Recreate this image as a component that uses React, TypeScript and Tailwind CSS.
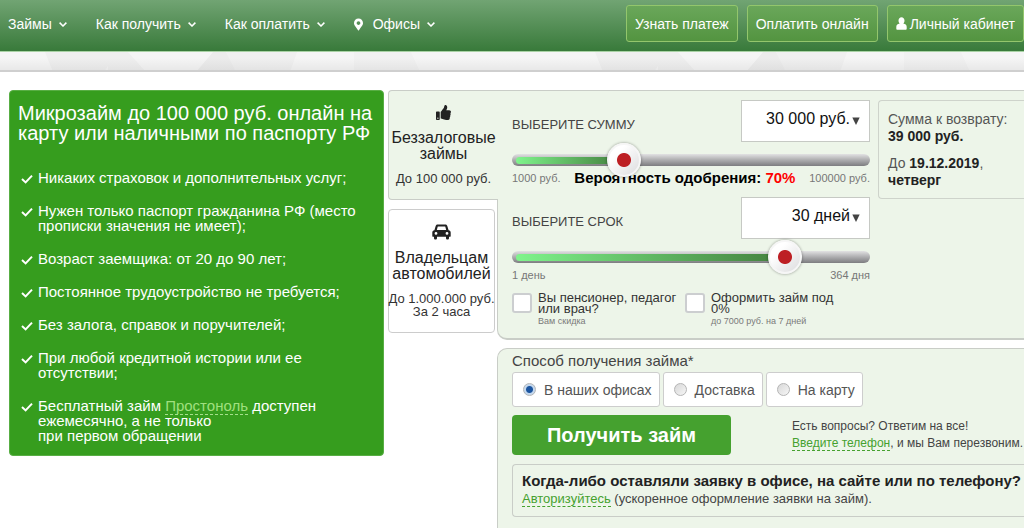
import { useState } from 'react';
import type { ReactNode } from 'react';
import { FaMapMarkerAlt, FaThumbsUp } from 'react-icons/fa';

function Chevron() {
  return (
    <svg viewBox="0 0 8 5" className="h-[5px] w-2" fill="none" stroke="currentColor" strokeWidth="1.5" aria-hidden="true">
      <path d="M0.600 0.600L4 4l3.400-3.400" />
    </svg>
  );
}

function Check() {
  return (
    <svg viewBox="0 0 12 10" className="mt-1 h-[10px] w-3 shrink-0" fill="none" stroke="currentColor" strokeWidth="2" aria-hidden="true">
      <path d="M1 5l3.600 3.400L11 1.600" />
    </svg>
  );
}

function UserIcon() {
  return (
    <svg viewBox="0 0 11 13" className="h-[13px] w-[11px]" fill="currentColor" aria-hidden="true">
      <path d="M5.500 0.300C3.800 0.300 2.500 1.600 2.500 3.600c0 1.300.5 2.400 1.200 3C1.700 7 .3 7.900.3 9.700v2.100c0 .6.300.9.800.9h8.800c.5 0 .8-.3.8-.9V9.700C10.700 7.900 9.300 7 7.300 6.600c.7-.6 1.200-1.700 1.200-3C8.500 1.600 7.200.3 5.500.3z" />
    </svg>
  );
}

function CarIcon() {
  return (
    <svg viewBox="0 0 19 16" className="h-4 w-[19px] text-[#222]" fill="currentColor" fillRule="evenodd" aria-hidden="true">
      <path d="M3.600 2.200C3.900 0.900 4.900 0.500 6 0.500h7c1.100 0 2.100 0.400 2.400 1.700l1.200 4C18 6.500 18.700 7.300 18.700 8.600v3.600c0 0.300-0.200 0.500-0.500 0.500H17v1.200c0 1-0.600 1.600-1.500 1.600s-1.500-0.600-1.500-1.600v-1.200H5v1.200c0 1-0.600 1.600-1.500 1.600S2 14.900 2 13.900v-1.200H0.800c-0.300 0-0.500-0.200-0.500-0.500V8.600c0-1.300 0.700-2.100 2.100-2.400zM4.800 6.100h9.400l-0.900-3.300c-0.100-0.200-0.200-0.300-0.400-0.300H6.100c-0.200 0-0.300 0.100-0.400 0.300zM2.600 9.400a1.400 1.400 0 1 0 2.800 0a1.400 1.400 0 1 0-2.800 0zM13.600 9.400a1.400 1.400 0 1 0 2.800 0a1.400 1.400 0 1 0-2.800 0z" />
    </svg>
  );
}

function NavItem({ children, icon }: { children: ReactNode; icon?: ReactNode }) {
  return (
    <a href="#" className="flex items-center">
      {icon}
      <span>{children}</span>
      <span className="ml-[7px]">
        <Chevron />
      </span>
    </a>
  );
}

function HeaderButton({ children }: { children: ReactNode }) {
  return (
    <button className="flex h-[37px] items-center gap-[3px] rounded-[3px] border border-[#93c66c] bg-linear-to-b from-[#6aa75a] to-[#539440] px-2 text-sm whitespace-nowrap text-white">
      {children}
    </button>
  );
}

const shapes = [
  { points: '45,0 128,0 146,20 108,20 108,14 104,20 53,20', fill: '#efefef' },
  { points: '196,20 213,0 226,0 240,20', fill: '#ececec' },
  { points: '226,0 297,0 290,20 236,20', fill: '#f0f0f0' },
  { points: '354,0 411,0 420,20 354,20', fill: '#f1f1f1' },
];

function Strip() {
  return (
    <div className="h-5 overflow-hidden border-b-2 border-[#cfcfcf] bg-[#f5f5f5]">
      <svg className="h-full w-full" aria-hidden="true">
        <defs>
          <linearGradient id="shade" x1="0" y1="0" x2="0" y2="1">
            <stop offset="0.3" stopColor="#000" stopOpacity="0" />
            <stop offset="1" stopColor="#000" stopOpacity="0.06" />
          </linearGradient>
          <pattern id="facets" width="550" height="20" patternUnits="userSpaceOnUse">
            {shapes.map((s) => (
              <polygon key={s.points} points={s.points} fill={s.fill} />
            ))}
          </pattern>
        </defs>
        <rect width="100%" height="20" fill="url(#facets)" />
        <rect width="100%" height="20" fill="url(#shade)" />
      </svg>
    </div>
  );
}

function Slider({ label, min, max, value, onChange }: { label: string; min: number; max: number; value: number; onChange: (v: number) => void }) {
  const part = (value - min) / (max - min);
  return (
    <div className="relative flex h-9 items-center">
      <div className="h-3 w-full rounded-full bg-linear-to-b from-[#e2e2e3] via-[#adadaf] to-[#7d7d80] p-1 pt-[3px] pb-[2px]">
        <div className="h-[7px] rounded-l-full bg-linear-to-r from-[#7ff48c] to-[#44813f]" style={{ width: `${part * 92 + 3}%` }} />
      </div>
      <input
        type="range"
        aria-label={label}
        min={min}
        max={max}
        value={value}
        onChange={(e) => onChange(Number(e.target.value))}
        className="absolute inset-0 z-10 m-0 h-full w-full cursor-pointer appearance-none bg-transparent [&::-webkit-slider-thumb]:h-[34px] [&::-webkit-slider-thumb]:w-[34px] [&::-webkit-slider-thumb]:appearance-none [&::-webkit-slider-thumb]:rounded-full [&::-webkit-slider-thumb]:bg-[radial-gradient(circle,#bd1f24_0_6.5px,transparent_7.5px),linear-gradient(135deg,#fff_30%,#d9d9db)] [&::-webkit-slider-thumb]:shadow-[inset_0_0_0_2px_#f6f6f6,0_0_3px_rgba(0,0,0,0.4)]"
      />
    </div>
  );
}

function Picker({ id, options }: { id: string; options: string[] }) {
  return (
    <div className="relative w-[129px]">
      <select id={id} className="h-[42px] w-full appearance-none border border-[#c6c9c4] bg-white pr-[19px] pb-1 text-right text-base text-[#111]">
        {options.map((o) => (
          <option key={o}>{o}</option>
        ))}
      </select>
      <svg viewBox="0 0 8 8" className="pointer-events-none absolute top-[17px] right-[10px] h-2 w-2" aria-hidden="true">
        <path d="M0.300 0.500h7.400L4 8z" fill="#444" />
      </svg>
    </div>
  );
}

function Tick({ title, note }: { title: string; note: string }) {
  return (
    <label className="flex gap-[6px]">
      <input type="checkbox" className="mt-px h-5 w-5 shrink-0 appearance-none rounded-[3px] border-2 border-[#ccced0] bg-white checked:bg-[#45a12f]" />
      <span className="w-[141px]">
        <span className="block text-[13px] leading-[11px] text-[#333]">{title}</span>
        <span className="mt-[2px] block text-[9px] leading-[10px] text-[#7a7a7a]">{note}</span>
      </span>
    </label>
  );
}

function Way({ label, checked }: { label: string; checked?: boolean }) {
  return (
    <label className="flex h-[35px] items-center gap-2 rounded-[3px] border border-[#cdcdcd] bg-white pr-[7px] pl-[10px] text-sm text-[#555]">
      <input
        type="radio"
        name="way"
        defaultChecked={checked}
        className="h-[13px] w-[13px] appearance-none rounded-full border border-[#b5b5b5] bg-linear-to-br from-[#d8d8d8] to-[#f6f6f6] checked:bg-[radial-gradient(circle,#1c55a0_0_3px,#c4d8ee_4px)]"
      />
      {label}
    </label>
  );
}

const benefits: ReactNode[] = [
  'Никаких страховок и дополнительных услуг;',
  'Нужен только паспорт гражданина РФ (место прописки значения не имеет);',
  'Возраст заемщика: от 20 до 90 лет;',
  'Постоянное трудоустройство не требуется;',
  'Без залога, справок и поручителей;',
  'При любой кредитной истории или ее отсутствии;',
  <>
    Бесплатный займ{' '}
    <a href="#" className="border-b border-dashed border-[#a5e08b] text-[#a0e07f]">
      Простоноль
    </a>{' '}
    доступен
    <br />
    ежемесячно, а не только
    <br />
    при первом обращении
  </>,
];

export default function App() {
  const [sum, setSum] = useState(30000);
  const [term, setTerm] = useState(79);

  return (
    <div className="flex min-h-screen flex-col overflow-x-hidden bg-white font-['Liberation_Sans',Arial,sans-serif] text-[#333]">
      <header className="flex h-[52px] items-start justify-between border-b border-[#a9d2a5] bg-linear-to-b from-[#71a473] to-[#387a3a] pl-2">
        <nav className="flex h-12 items-center gap-[29px] text-sm whitespace-nowrap text-white">
          <NavItem>Займы</NavItem>
          <NavItem>Как получить</NavItem>
          <NavItem>Как оплатить</NavItem>
          <NavItem icon={<FaMapMarkerAlt className="mr-[10px] h-[13px] w-[9px]" />}>Офисы</NavItem>
        </nav>
        <div className="mt-[5px] flex gap-[9px]">
          <HeaderButton>Узнать платеж</HeaderButton>
          <HeaderButton>Оплатить онлайн</HeaderButton>
          <HeaderButton>
            <UserIcon />
            Личный кабинет
          </HeaderButton>
        </div>
      </header>
      <Strip />

      <main className="flex flex-1 pt-[18px] pl-[9px]">
        <section className="w-[375px] shrink-0 self-start rounded-[4px] border border-[#58ae44] bg-[#369d1e] px-2 pt-3 pb-3 text-white">
          <h1 className="text-xl leading-5">Микрозайм до 100 000 руб. онлайн на карту или наличными по паспорту РФ</h1>
          <ul className="mt-[27px] flex flex-col gap-[18px] pr-4 pl-[3px] text-[15px] leading-[15px]">
            {benefits.map((b, i) => (
              <li key={i} className="flex gap-[5px]">
                <Check />
                <span>{b}</span>
              </li>
            ))}
          </ul>
        </section>

        <div className="ml-1 flex w-[109px] shrink-0 flex-col gap-[9px] text-center">
          <button className="relative z-10 -mr-px flex h-[110px] flex-col items-center rounded-l-[4px] border border-r-0 border-[#c9cdc7] bg-[#edf5e9] pt-[14px]">
            <FaThumbsUp className="h-[15px] w-[15px] text-[#222]" />
            <span className="mt-[10px] text-base leading-4 text-[#222]">
              Беззалоговые
              <br />
              займы
            </span>
            <span className="mt-[10px] text-[13px] leading-[13px]">До 100 000 руб.</span>
          </button>
          <button className="mr-[2px] flex h-[124px] flex-col items-center rounded-[4px] border border-[#cccccc] bg-white pt-[14px]">
            <CarIcon />
            <span className="mt-[10px] text-base leading-4 text-[#222]">
              Владельцам
              <br />
              автомобилей
            </span>
            <span className="mt-[10px] text-[13px] leading-[13px] whitespace-nowrap">
              До 1.000.000 руб.
              <br />
              За 2 часа
            </span>
          </button>
        </div>

        <div className="flex min-w-0 flex-1 flex-col gap-2">
          <section className="flex h-[250px] gap-2 rounded-bl-[10px] border border-r-0 border-b-2 border-[#c9cdc7] bg-[#edf5e9] pt-[9px] pl-[14px]">
            <div className="min-w-0 flex-1">
              <div className="flex justify-between">
                <label htmlFor="sum" className="mt-4 text-[13px] leading-[18px] text-[#444]">
                  ВЫБЕРИТЕ СУММУ
                </label>
                <Picker id="sum" options={['30 000 руб.', '50 000 руб.', '100 000 руб.']} />
              </div>
              <Slider label="Сумма" min={1000} max={100000} value={sum} onChange={setSum} />
              <div className="-mt-[9px] flex items-center justify-between text-[11px] leading-[18px] whitespace-nowrap text-[#777]">
                <span>1000 руб.</span>
                <strong className="text-[15px] text-black">
                  Вероятность одобрения: <span className="text-[#f00]">70%</span>
                </strong>
                <span>100000 руб.</span>
              </div>

              <div className="mt-[10px] flex justify-between">
                <label htmlFor="term" className="mt-4 text-[13px] leading-[18px] text-[#444]">
                  ВЫБЕРИТЕ СРОК
                </label>
                <Picker id="term" options={['30 дней', '60 дней', '364 дня']} />
              </div>
              <Slider label="Срок" min={0} max={100} value={term} onChange={setTerm} />
              <div className="-mt-[9px] flex justify-between text-[11px] leading-[18px] text-[#777]">
                <span>1 день</span>
                <span>364 дня</span>
              </div>

              <div className="mt-2 flex gap-[6px]">
                <Tick title="Вы пенсионер, педагог или врач?" note="Вам скидка" />
                <Tick title="Оформить займ под 0%" note="до 7000 руб. на 7 дней" />
              </div>
            </div>
            <aside className="h-[99px] w-[146px] shrink-0 rounded-l-[4px] border border-r-0 border-[#ced3cb] pt-[10px] pl-[9px] text-sm leading-[17px]">
              <p className="text-[#555]">
                Сумма к возврату:
                <br />
                <b className="text-[#222]">39 000 руб.</b>
              </p>
              <p className="mt-[10px] text-[#555]">
                До <b className="text-[#222]">19.12.2019</b>,
                <br />
                <b className="text-[#222]">четверг</b>
              </p>
            </aside>
          </section>

          <section className="flex-1 rounded-tl-[10px] border border-r-0 border-b-0 border-[#c9cdc7] bg-[#edf5e9] pt-1 pl-[14px]">
            <h2 className="text-[15px] leading-4 text-[#444]">Способ получения займа*</h2>
            <div className="mt-[3px] flex gap-[3px]">
              <Way label="В наших офисах" checked />
              <Way label="Доставка" />
              <Way label="На карту" />
            </div>
            <div className="mt-2 flex items-center gap-[61px]">
              <button className="h-10 w-[219px] shrink-0 rounded-[4px] bg-[#45a12f] text-xl font-bold text-white">Получить займ</button>
              <p className="text-xs leading-[17px] whitespace-nowrap text-[#444]">
                Есть вопросы? Ответим на все!
                <br />
                <a href="#" className="border-b border-dashed border-[#45a12f] text-[#45a12f]">
                  Введите телефон
                </a>
                , и мы Вам перезвоним.
              </p>
            </div>
            <div className="mt-[9px] h-[53px] rounded-l-[4px] border border-r-0 border-[#c9cdc7] pt-[7px] pl-[9px]">
              <h3 className="text-[15px] leading-[18px] font-bold text-[#222]">Когда-либо оставляли заявку в офисе, на сайте или по телефону?</h3>
              <p className="text-[13px] leading-[18px] text-[#444]">
                <a href="#" className="border-b border-dashed border-[#45a12f] text-[#45a12f]">
                  Авторизуйтесь
                </a>{' '}
                (ускоренное оформление заявки на займ).
              </p>
            </div>
          </section>
        </div>
      </main>
    </div>
  );
}
